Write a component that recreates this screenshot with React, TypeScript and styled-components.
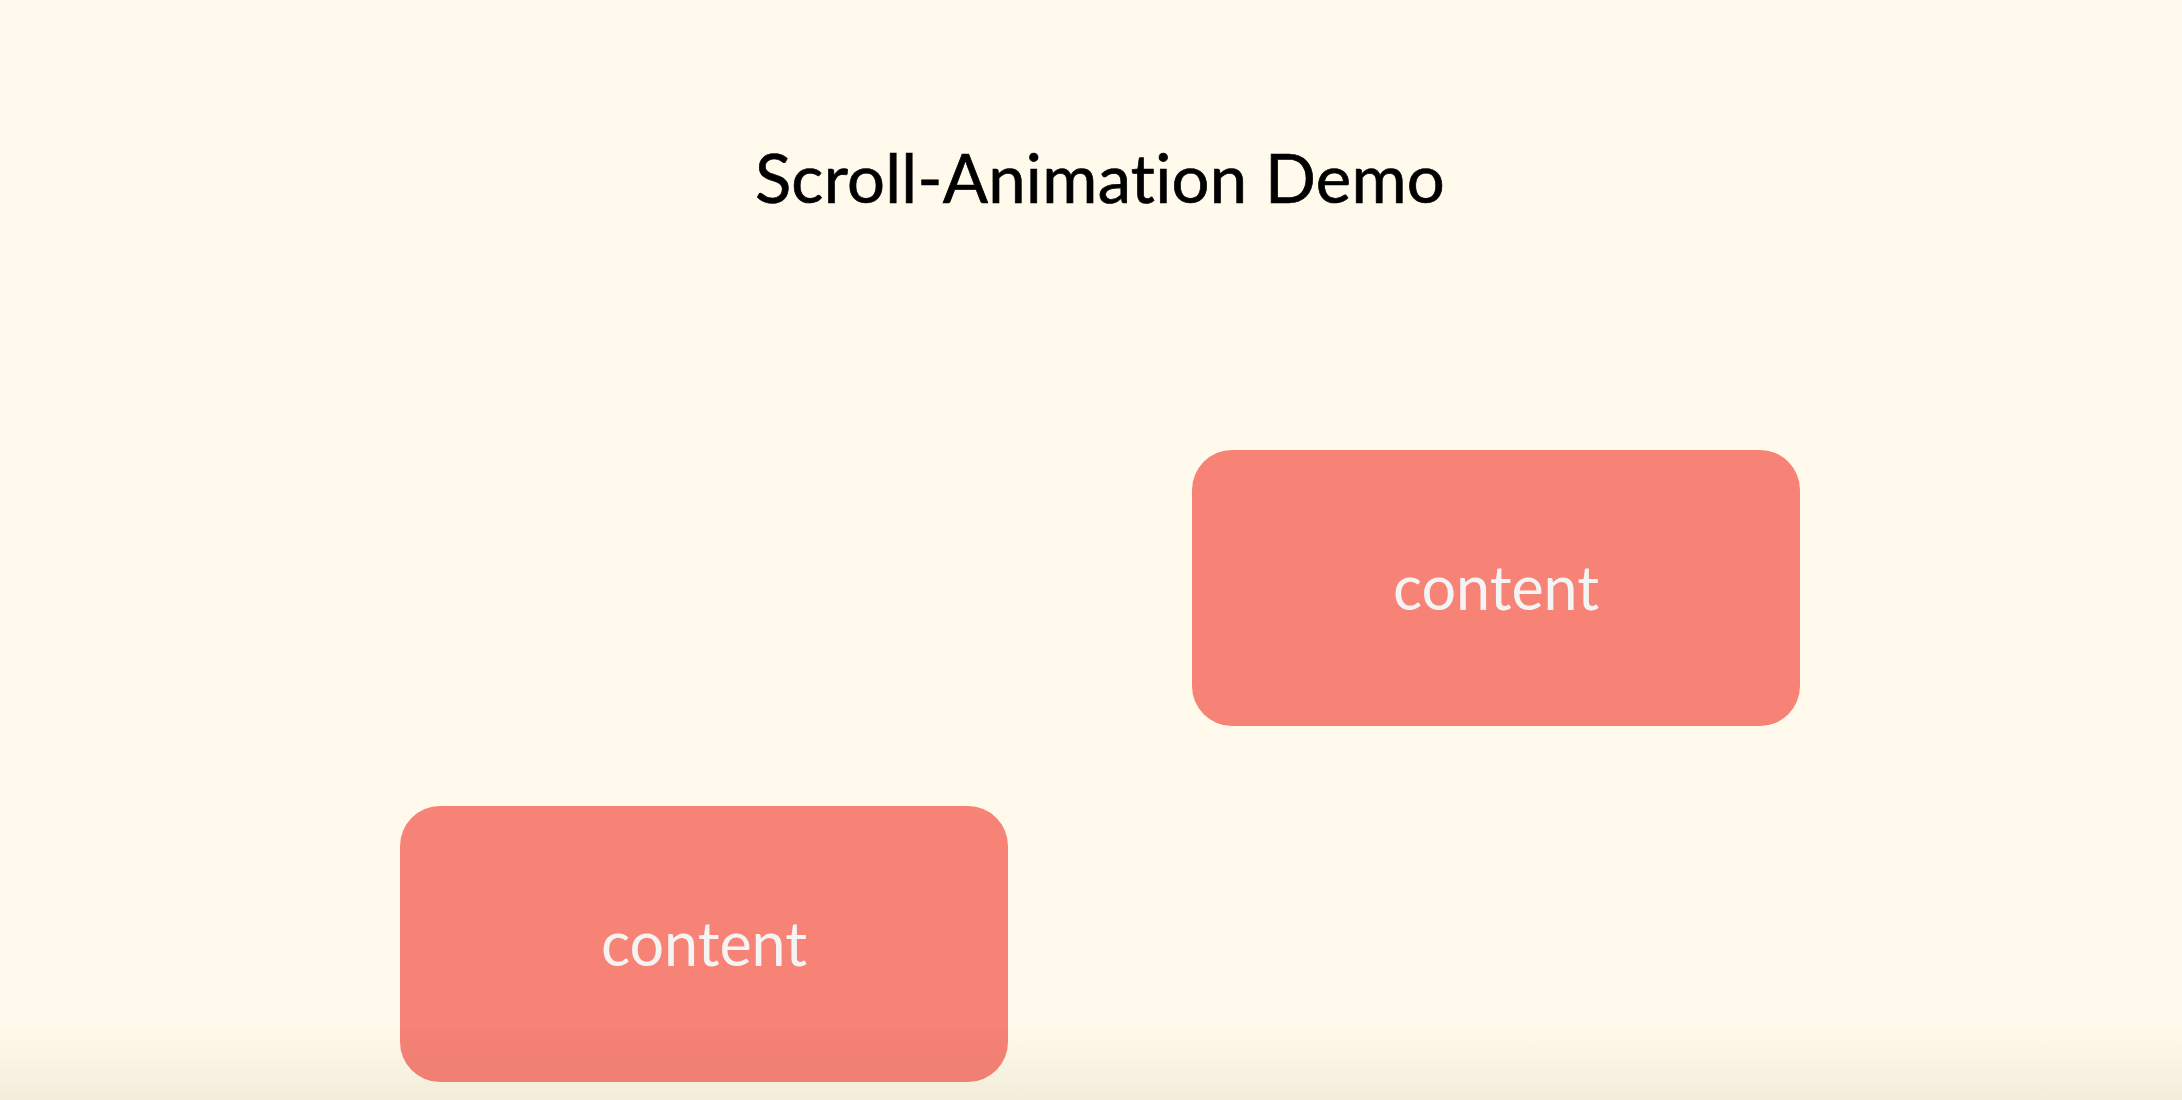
import React from 'react';
import styled, { createGlobalStyle } from 'styled-components';

const GlobalStyle = createGlobalStyle`
  html, body {
    margin: 0;
    padding: 0;
    background: #fffaeb;
    font-family: Lato, "Noto Sans", sans-serif;
    font-variant-ligatures: none;
    overflow: hidden;
  }
`;

const Page = styled.div`
  min-height: 1100px;
  background: #fffaeb;
`;

const Title = styled.h1`
  margin: 0;
  padding: 139px 0 0 18px;
  text-align: center;
  font-size: 67px;
  line-height: 76px;
  font-weight: 400;
  letter-spacing: 0.3px;
  -webkit-text-stroke: 0.7px #000;
  color: #000;
`;

const Track = styled.div`
  display: flex;
  flex-direction: column;
  gap: 80px;
  width: 1400px;
  margin: 235px 0 0 400px;
`;

const Row = styled.div<{ side: 'left' | 'right' }>`
  display: flex;
  justify-content: ${(p) => (p.side === 'left' ? 'flex-start' : 'flex-end')};
`;

const Card = styled.div`
  width: 608px;
  height: 276px;
  border-radius: 40px;
  background: #f78276;
  color: #f4f4f4;
  display: flex;
  align-items: center;
  justify-content: center;
  font-size: 61px;
  padding-bottom: 4px;
  box-sizing: border-box;
`;

// soft shade along the bottom edge of the window
const BottomShade = styled.div`
  position: fixed;
  left: 0;
  right: 0;
  bottom: 0;
  height: 75px;
  pointer-events: none;
  background: linear-gradient(to bottom, rgba(120, 100, 60, 0), rgba(120, 100, 60, 0.09));
`;

const items: Array<'left' | 'right'> = ['right', 'left'];

export default function App() {
  return (
    <Page>
      <GlobalStyle />
      <Title>Scroll-Animation Demo</Title>
      <Track>
        {items.map((side, i) => (
          <Row key={i} side={side}>
            <Card>content</Card>
          </Row>
        ))}
      </Track>
      <BottomShade />
    </Page>
  );
}
